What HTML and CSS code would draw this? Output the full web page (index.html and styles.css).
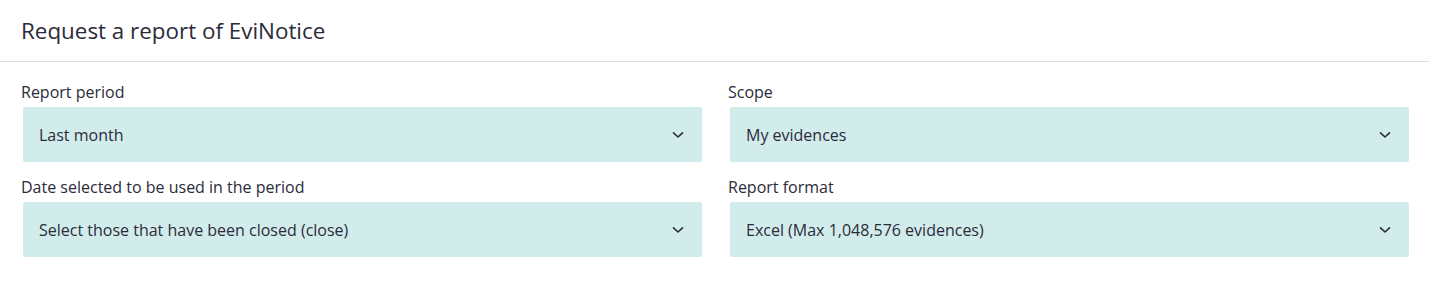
FILE: index.html
```html
<!DOCTYPE html>
<html lang="en">
<head>
    <meta charset="UTF-8">
    <meta name="viewport" content="width=device-width, initial-scale=1.0">
    <title>Request a report of EviNotice</title>
    <link rel="stylesheet" href="styles.css">
</head>
<body>

<div class="header">
    <h1>Request a report of EviNotice</h1>
</div>

<div class="form">
    <div class="field">
        <label>Report period</label>
        <div class="select">
            <span>Last month</span>
            <svg class="chevron" width="12" height="8" viewBox="0 0 12 8"><path d="M1.5 1.8 L6 6 L10.5 1.8" /></svg>
        </div>
    </div>
    <div class="field">
        <label>Scope</label>
        <div class="select">
            <span>My evidences</span>
            <svg class="chevron" width="12" height="8" viewBox="0 0 12 8"><path d="M1.5 1.8 L6 6 L10.5 1.8" /></svg>
        </div>
    </div>
    <div class="field">
        <label>Date selected to be used in the period</label>
        <div class="select">
            <span>Select those that have been closed (close)</span>
            <svg class="chevron" width="12" height="8" viewBox="0 0 12 8"><path d="M1.5 1.8 L6 6 L10.5 1.8" /></svg>
        </div>
    </div>
    <div class="field">
        <label>Report format</label>
        <div class="select">
            <span>Excel (Max 1,048,576 evidences)</span>
            <svg class="chevron" width="12" height="8" viewBox="0 0 12 8"><path d="M1.5 1.8 L6 6 L10.5 1.8" /></svg>
        </div>
    </div>
</div>

</body>
</html>
```

FILE: styles.css
```css
* {
    box-sizing: border-box;
    margin: 0;
    padding: 0;
}
body {
    font-family: "Open Sans", "Noto Sans", sans-serif;
    color: #2b2b3a;
    background: #fff;
}
.header {
    height: 62px;
    border-bottom: 1px solid #dcdcdc;
    padding: 0 21px;
    display: flex;
    align-items: center;
}
.header h1 {
    font-size: 22.4px;
    font-weight: 400;
    line-height: 28px;
    margin-top: 1px;
}
.form {
    display: grid;
    grid-template-columns: 1fr 1fr;
    column-gap: 28px;
    row-gap: 15px;
    padding: 20px 20px 0 23px;
}
.field {
    display: flex;
    flex-direction: column;
}
.field label {
    font-size: 16px;
    line-height: 20px;
    margin: 0 0 5px -2px;
}
.select {
    height: 55px;
    background: #d2ecec;
    border-radius: 2px;
    display: flex;
    align-items: center;
    justify-content: space-between;
    padding: 0 18px 0 16px;
    font-size: 16px;
    cursor: pointer;
}
.chevron path {
    fill: none;
    stroke: #2b2b3a;
    stroke-width: 1.6;
    stroke-linecap: round;
    stroke-linejoin: round;
}
```
